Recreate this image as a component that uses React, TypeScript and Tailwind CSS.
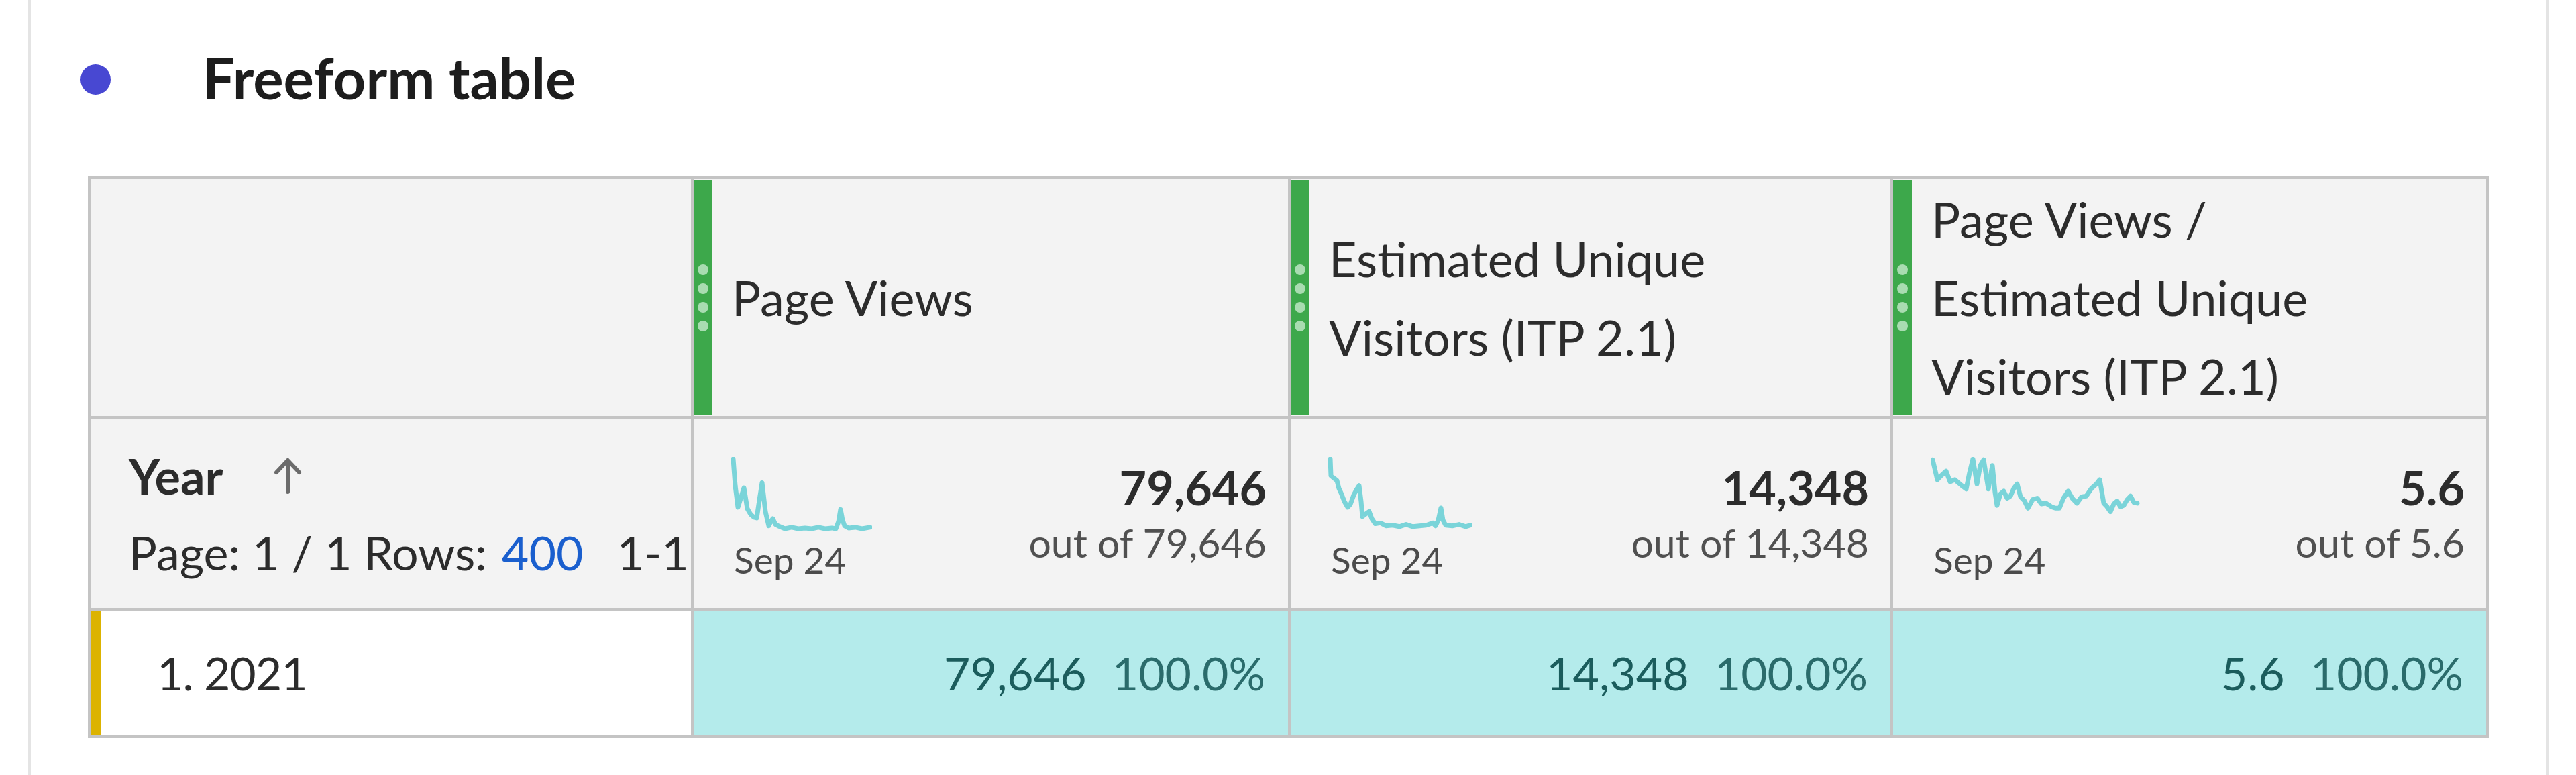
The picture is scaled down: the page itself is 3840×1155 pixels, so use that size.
import React from 'react';

// Freeform table panel with one dimension column and three metric columns
type Metric = {
  title: string[];
  total: string;
  outOf: string;
  value: string;
  pct: string;
  spark: { w: number; h: number; sy: number; points: string };
};

const metrics: Metric[] = [
  {
    title: ['Page Views'],
    total: '79,646',
    outOf: 'out of 79,646',
    value: '79,646',
    pct: '100.0%',
    spark: {
      w: 210,
      h: 112,
      sy: 1.07,
      points:
        '3,3 6,40 10,70 14,58 19,43 24,72 29,80 34,84 38,85 42,60 46,36 49,60 51,76 54,88 56,96 59,90 62,86 66,94 70,96 80,100 90,98 100,100 110,99 120,100 130,98 140,100 150,99 156,100 160,90 163,73 166,88 169,96 175,99 185,98 195,100 207,98',
    },
  },
  {
    title: ['Estimated Unique', 'Visitors (ITP 2.1)'],
    total: '14,348',
    outOf: 'out of 14,348',
    value: '14,348',
    pct: '100.0%',
    spark: {
      w: 215,
      h: 112,
      sy: 1.07,
      points:
        '3,3 4,26 9,30 13,33 16,44 19,50 24,62 29,70 33,66 38,53 42,46 46,40 49,62 51,83 55,80 61,76 65,86 70,93 78,92 86,96 96,95 106,97 116,94 126,97 136,96 146,95 156,92 160,96 164,88 168,71 171,88 175,95 185,96 195,94 205,97 212,95',
    },
  },
  {
    title: ['Page Views /', 'Estimated Unique', 'Visitors (ITP 2.1)'],
    total: '5.6',
    outOf: 'out of 5.6',
    value: '5.6',
    pct: '100.0%',
    spark: {
      w: 312,
      h: 90,
      sy: 1.06,
      points:
        '3,4 10,32 16,26 23,20 29,35 36,32 46,40 53,45 58,22 63,3 69,38 74,12 79,4 86,45 92,12 96,50 99,68 104,52 109,48 114,58 119,55 124,44 129,38 134,56 140,62 145,72 152,60 159,58 165,66 172,65 180,70 186,72 192,72 198,58 205,48 211,58 218,65 225,56 232,55 240,44 247,38 252,32 258,65 263,70 268,77 273,66 278,62 283,70 288,68 293,60 298,55 303,64 308,65',
    },
  },
];

const scalePoints = (points: string, sy: number) =>
  points
    .split(' ')
    .map((p) => {
      const [x, y] = p.split(',').map(Number);
      return `${x},${(y * sy).toFixed(1)}`;
    })
    .join(' ');

const Dots = () => (
  <div className="w-[28px] h-full bg-[#3da84b] flex flex-col items-center justify-center gap-[12px]">
    <div className="w-[16px] h-[16px] rounded-full bg-[#a9dcb1]" />
    <div className="w-[16px] h-[16px] rounded-full bg-[#a9dcb1]" />
    <div className="w-[16px] h-[16px] rounded-full bg-[#a9dcb1]" />
    <div className="w-[16px] h-[16px] rounded-full bg-[#a9dcb1]" />
  </div>
);

const Spark = ({ w, h, sy, points }: { w: number; h: number; sy: number; points: string }) => (
  <svg width={w} height={h} viewBox={`0 0 ${w} ${h}`} className="block">
    <polyline
      points={scalePoints(points, sy)}
      fill="none"
      stroke="#7ad4d9"
      strokeWidth={7}
      strokeLinejoin="round"
      strokeLinecap="round"
    />
  </svg>
);

const SortArrow = () => (
  <svg width="46" height="55" viewBox="0 0 46 55" className="block">
    <path d="M23 52V6M6 23L23 5L40 23" fill="none" stroke="#6b6b6b" strokeWidth={6} strokeLinecap="round" strokeLinejoin="round" />
  </svg>
);

export default function App() {
  return (
    <div className="w-[3840px] h-[1155px] bg-white pl-[42px] font-['Lato',sans-serif] text-[#2c2c2c]">
      <div className="w-[3758px] h-full border-x-4 border-[#e4e4e4] pt-[65px]">
        {/* Title */}
        <div className="flex items-center h-[101px]">
          <div className="ml-[74px] mt-[6px] w-[45px] h-[45px] rounded-full bg-[#4848d2]" />
          <div className="ml-[137px] text-[85px] leading-[101px] font-bold text-[#1d1d1d]">Freeform table</div>
        </div>

        {/* Table */}
        <div className="mt-[97px] ml-[85px] w-[3579px] border-4 border-[#c4c4c4]">
          {/* Header row */}
          <div className="grid grid-cols-[895px_890px_898px_888px] h-[357px] border-b-4 border-[#c4c4c4] bg-[#f3f3f3]">
            <div />
            {metrics.map((m) => (
              <div key={m.total} className="flex border-l-4 border-[#c4c4c4] py-px">
                <Dots />
                <div className="flex flex-col justify-center pl-[29px] text-[72px] leading-[117px] whitespace-nowrap">
                  {m.title.map((line) => (
                    <div key={line}>{line}</div>
                  ))}
                </div>
              </div>
            ))}
          </div>

          {/* Totals row */}
          <div className="grid grid-cols-[895px_890px_898px_888px] h-[286px] border-b-4 border-[#c4c4c4] bg-[#f3f3f3]">
            <div className="pl-[57px] pt-[43px] overflow-hidden whitespace-nowrap">
              <div className="flex items-center h-[84px]">
                <span className="text-[72px] leading-[84px] font-bold">Year</span>
                <span className="ml-[74px] -mt-[2px]">
                  <SortArrow />
                </span>
              </div>
              <div className="mt-[30px] text-[70px] leading-[84px]">
                Page: 1 / 1 Rows:<span className="ml-[22px] text-[#1a5fce]">400</span>
                <span className="ml-[50px]">1-1 of 1</span>
              </div>
            </div>
            {metrics.map((m) => (
              <div key={m.total} className="flex justify-between border-l-4 border-[#c4c4c4] pl-[56px] pr-[32px]">
                <div className="flex flex-col pt-[57px]">
                  <div className="h-[112px]">
                    <Spark {...m.spark} />
                  </div>
                  <div className="mt-[8px] pl-[4px] text-[55px] leading-[66px] text-[#4b4b4b]">Sep 24</div>
                </div>
                <div className="flex flex-col items-end pt-[60px]">
                  <div className="text-[70px] leading-[84px] font-bold">{m.total}</div>
                  <div className="mt-[6px] text-[59px] leading-[70px] text-[#505050]">{m.outOf}</div>
                </div>
              </div>
            ))}
          </div>

          {/* Data row */}
          <div className="grid grid-cols-[895px_890px_898px_888px] h-[186px]">
            <div className="flex bg-white">
              <div className="w-[16px] h-full bg-[#dcb300]" />
              <div className="flex items-center pl-[83px] text-[68px] leading-[80px] tracking-[-1px]">1. 2021</div>
            </div>
            {metrics.map((m) => (
              <div key={m.total} className="flex items-center justify-end gap-[38px] border-l-4 border-[#c4c4c4] bg-[#b4ebeb] pr-[34px] text-[68px] leading-[80px]">
                <span className="text-[#1b5c5c]">{m.value}</span>
                <span className="text-[#2a6b6b]">{m.pct}</span>
              </div>
            ))}
          </div>
        </div>
      </div>
    </div>
  );
}
